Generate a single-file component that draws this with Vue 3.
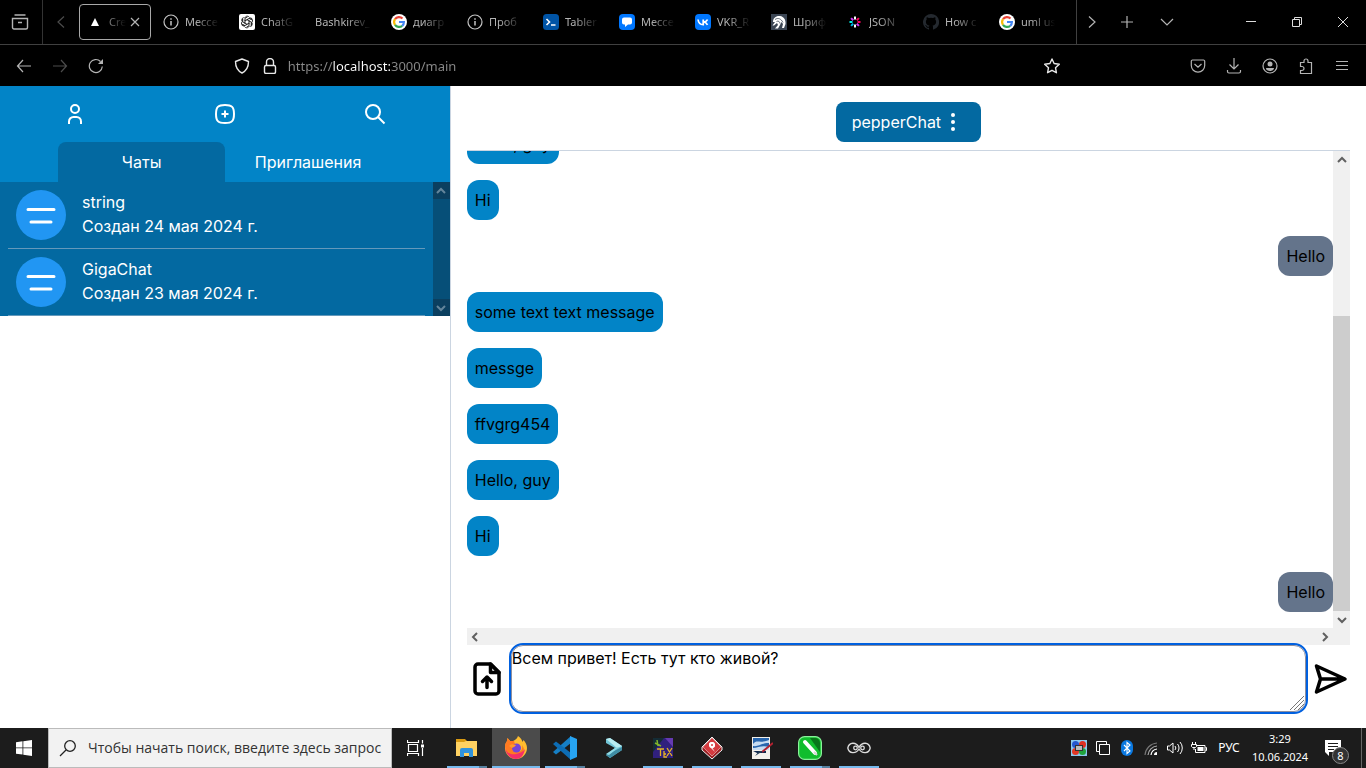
<script setup>
import { ref } from 'vue'

const tabs = [
  { icon: 'info', label: 'Мессе' },
  { icon: 'gpt', label: 'ChatG' },
  { icon: '', label: 'Bashkirev_' },
  { icon: 'google', label: 'диагр' },
  { icon: 'info', label: 'Проб' },
  { icon: 'tabler', label: 'Tabler' },
  { icon: 'messenger', label: 'Мессе' },
  { icon: 'vk', label: 'VKR_R' },
  { icon: 'font', label: 'Шриф' },
  { icon: 'json', label: 'JSON' },
  { icon: 'github', label: 'How c' },
  { icon: 'google', label: 'uml us' }
]

const chats = [
  { name: 'string', created: 'Создан 24 мая 2024 г.' },
  { name: 'GigaChat', created: 'Создан 23 мая 2024 г.' }
]

const messages = [
  { text: 'Hello, guy' },
  { text: 'Hi' },
  { text: 'Hello', own: true },
  { text: 'some text text message' },
  { text: 'messge' },
  { text: 'ffvgrg454' },
  { text: 'Hello, guy' },
  { text: 'Hi' },
  { text: 'Hello', own: true }
]

const apps = [
  { id: 'explorer', title: 'Проводник', open: true, group: true },
  { id: 'firefox', title: 'Firefox', open: true, active: true },
  { id: 'vscode', title: 'Visual Studio Code', open: true, group: true },
  { id: 'shell', title: 'Terminal' },
  { id: 'tex', title: 'TeX', open: true },
  { id: 'paradigm', title: 'Visual Paradigm', open: true },
  { id: 'paint', title: 'Редактор изображений', open: true },
  { id: 'corel', title: 'CorelDRAW', open: true, group: true },
  { id: 'eyes', title: 'Просмотр', open: true }
]

const url = ref('https://localhost:3000/main')
const draft = ref('Всем привет! Есть тут кто живой?')
const query = ref('')
const section = ref('chats')
</script>

<template>
  <div class="desktop">
    <header class="browser">
      <div class="tabstrip">
        <button class="ghost overview" aria-label="Обзор вкладок">
          <svg width="18" height="18" viewBox="0 0 18 18" class="line"><path d="M3.500 2h11M1.500 5.500h15v9a1.500 1.500 0 0 1-1.500 1.500H3a1.500 1.500 0 0 1-1.500-1.500zM7 9.500h4" stroke-width="1.400" /></svg>
        </button>
        <button class="ghost scroll-left" aria-label="Назад по вкладкам">
          <svg width="16" height="16" viewBox="0 0 16 16" class="line dim"><path d="M11 2.500 5 8l6 5.500" /></svg>
        </button>
        <div class="tab active">
          <svg width="16" height="16" viewBox="0 0 16 16"><path d="M8 4 12 12H4z" fill="#fff" /></svg>
          <span class="tab-label">Cre</span>
          <button class="ghost close-tab" aria-label="Закрыть вкладку">
            <svg width="10" height="10" viewBox="0 0 10 10" class="line"><path d="m1 1 8 8M9 1 1 9" /></svg>
          </button>
        </div>
        <div v-for="(tab, i) in tabs" :key="i" class="tab">
          <svg v-if="tab.icon" width="16" height="16" viewBox="0 0 16 16">
            <g v-if="tab.icon === 'info'" fill="none" stroke="#c4c4c4" stroke-width="1.200">
              <circle cx="8" cy="8" r="7" /><path d="M8 7v4.500M8 4.200v1.500" stroke-width="1.500" />
            </g>
            <g v-else-if="tab.icon === 'gpt'">
              <rect width="16" height="16" rx="2" fill="#fff" />
              <g fill="none" stroke="#222" stroke-width=".9">
                <path v-for="a in 6" :key="a" :transform="`rotate(${a * 60} 8 8)`" d="M6 7.200V4.300C6 1.800 9.500 1.500 10.500 3.500M6 4.300 8.500 2.900M8 5.700l3 1.700" />
              </g>
            </g>
            <g v-else-if="tab.icon === 'google'">
              <circle cx="8" cy="8" r="8" fill="#fff" />
              <g fill="none" stroke-width="2.200">
                <path d="M4 5.200A4.900 4.900 0 0 1 11.500 4.500" stroke="#ea4335" />
                <path d="M4 5.200a5 5 0 0 0 0 5.600" stroke="#fbbc05" />
                <path d="M4 10.800a4.900 4.900 0 0 0 7.200 1" stroke="#34a853" />
                <path d="M11.200 11.800A5 5 0 0 0 12.900 8H8" stroke="#4285f4" />
              </g>
            </g>
            <g v-else-if="tab.icon === 'tabler'">
              <rect width="16" height="16" rx="3.500" fill="#0054a6" />
              <path d="m3.500 5 3 3-3 3M8 11h4.500" fill="none" stroke="#fff" stroke-width="1.600" />
            </g>
            <g v-else-if="tab.icon === 'messenger'">
              <rect width="16" height="16" rx="4" fill="#07f" />
              <path d="M5 3.500h6A2 2 0 0 1 13 5.500v3a2 2 0 0 1-2 2H9L6 13v-2.500H5a2 2 0 0 1-2-2v-3a2 2 0 0 1 2-2z" fill="#fff" />
            </g>
            <g v-else-if="tab.icon === 'vk'">
              <rect width="16" height="16" rx="4" fill="#07f" />
              <path d="M3 5.500C3.500 9 5 10.700 8.200 10.700V5.500M8.500 8c2 0 3.300-1 4-2.500M8.500 8c2.300.3 3.300 1.300 4 2.900" fill="none" stroke="#fff" stroke-width="1.700" />
            </g>
            <g v-else-if="tab.icon === 'font'">
              <rect width="16" height="16" fill="#3c4654" />
              <path d="M2 8C2 4 5 1.500 9 2c4 .5 6 4 5.500 8L13 14h-2l1-4-1.500-2L9 11l-2 3.500H4L7 11 6 9l-3 2.500H1.500L4 8z" fill="#fff" />
              <path d="M4 5.500c3-2 6-1 8 3M5.500 7.500c2-1 3 0 3.500 2" fill="none" stroke="#3c4654" stroke-width=".8" />
            </g>
            <g v-else-if="tab.icon === 'json'" stroke-width="2">
              <path d="M8 2.500v3" stroke="#fff" /><path d="m11.900 4.100-2.100 2.100" stroke="#fb015b" />
              <path d="M13.500 8h-3" stroke="#fb015b" /><path d="m11.900 11.900-2.100-2.100" stroke="#d63aff" />
              <path d="M8 13.500v-3" stroke="#fff" /><path d="m4.100 11.900 2.100-2.100" stroke="#00b9f1" />
              <path d="M2.500 8h3" stroke="#00f2e6" /><path d="m4.100 4.100 2.100 2.100" stroke="#d63aff" />
            </g>
            <path v-else d="M8 0a8 8 0 0 0-2.500 15.600c.4 0 .5-.2.500-.4v-1.500c-2.200.5-2.700-1-2.700-1-.4-.9-.9-1.100-.9-1.100-.7-.5.1-.5.1-.5.800 0 1.200.8 1.200.8.700 1.200 1.900.9 2.300.7 0-.5.3-.9.500-1.100-1.800-.2-3.600-.9-3.600-4 0-.8.300-1.500.8-2.100 0-.200-.4-1 .1-2.100 0 0 .7-.2 2.200.8a8 8 0 0 1 4 0c1.500-1 2.200-.8 2.200-.8.5 1.100.1 1.900.1 2.100.5.600.8 1.300.8 2.100 0 3.100-1.800 3.800-3.600 4 .3.200.5.700.5 1.500v2.200c0 .2.100.5.600.4A8 8 0 0 0 8 0z" fill="#24292f" />
          </svg>
          <span class="tab-label">{{ tab.label }}</span>
        </div>
        <div class="strip-end">
          <button class="ghost w30" aria-label="Вперёд по вкладкам">
            <svg width="16" height="16" viewBox="0 0 16 16" class="line"><path d="m5 2.500 6 5.500-6 5.500" /></svg>
          </button>
          <button class="ghost w40" aria-label="Новая вкладка">
            <svg width="14" height="14" viewBox="0 0 14 14" class="line"><path d="M7 1v12M1 7h12" /></svg>
          </button>
          <button class="ghost w40" aria-label="Список вкладок">
            <svg width="14" height="14" viewBox="0 0 14 14" class="line"><path d="m1 4 6 6 6-6" /></svg>
          </button>
        </div>
        <div class="window-controls">
          <button class="ghost w46" aria-label="Свернуть">
            <svg width="10" height="10" viewBox="0 0 10 10" class="line white"><path d="M0 4.500h10" /></svg>
          </button>
          <button class="ghost w46" aria-label="Восстановить">
            <svg width="10" height="10" viewBox="0 0 10 10" class="line white"><path d="M.5 2.500h7v7h-7zM2.500 2.500v-2h7v7h-2" /></svg>
          </button>
          <button class="ghost w46" aria-label="Закрыть">
            <svg width="10" height="10" viewBox="0 0 10 10" class="line white"><path d="m0 0 10 10M10 0 0 10" /></svg>
          </button>
        </div>
      </div>

      <div class="toolbar">
        <button class="ghost w36" aria-label="Назад">
          <svg width="16" height="16" viewBox="0 0 16 16" class="line"><path d="M15 8H1.500M7 2 1.500 8 7 14" /></svg>
        </button>
        <button class="ghost w36" aria-label="Вперёд">
          <svg width="16" height="16" viewBox="0 0 16 16" class="line dim"><path d="M1 8h13.500M9 2l5.500 6L9 14" /></svg>
        </button>
        <button class="ghost w36" aria-label="Обновить">
          <svg width="16" height="16" viewBox="0 0 16 16" class="line"><path d="M14.300 8.500A6.500 6.500 0 1 1 12.500 3.500" /><path d="M15 1v5h-5z" fill="#b4b4b4" stroke="none" /></svg>
        </button>
        <div class="spacer"></div>
        <div class="address">
          <svg width="16" height="16" viewBox="0 0 16 16" class="line light"><path d="M8 1 14.500 3.500C14.500 9 13 12.500 8 15 3 12.500 1.500 9 1.500 3.500z" stroke-linejoin="round" /></svg>
          <svg width="16" height="16" viewBox="0 0 16 16" class="line light"><rect x="2.500" y="7.500" width="11" height="8" rx="1.500" /><path d="M4.500 7.500V4a3.500 3.500 0 0 1 7 0v3.500" /></svg>
          <input v-model="url" class="url" aria-label="Адрес" />
          <button class="ghost star" aria-label="Добавить в закладки">
            <svg width="16" height="16" viewBox="0 0 16 16" class="line light"><path d="m8 1 2.100 4.500 5.200.7-3.800 3.500.9 5L8 12.300l-4.400 2.400.9-5L.7 6.200l5.200-.7z" stroke-linejoin="round" /></svg>
          </button>
        </div>
        <div class="spacer"></div>
        <button class="ghost w36" aria-label="Pocket">
          <svg width="16" height="16" viewBox="0 0 16 16" class="line"><path d="M2.500 2h11A1.200 1.200 0 0 1 14.700 3v4.500a6.700 6.700 0 0 1-13.400 0V3A1.200 1.200 0 0 1 2.500 2zM4.500 6 8 9.300 11.500 6" /></svg>
        </button>
        <button class="ghost w36" aria-label="Загрузки">
          <svg width="16" height="16" viewBox="0 0 16 16" class="line"><path d="M8 0v10.500M3.500 6.500 8 11l4.500-4.500M1.500 12v1.500a1.500 1.500 0 0 0 1.500 1.500h10a1.500 1.500 0 0 0 1.500-1.500V12" /></svg>
        </button>
        <button class="ghost w36" aria-label="Аккаунт">
          <svg width="16" height="16" viewBox="0 0 16 16" class="line"><circle cx="8" cy="8" r="7" /><circle cx="8" cy="6" r="2.500" fill="#b4b4b4" stroke="none" /><path d="M4 10h8c0 2-2 3-4 3s-4-1-4-3z" fill="#b4b4b4" stroke="none" /></svg>
        </button>
        <button class="ghost w36" aria-label="Расширения">
          <svg width="16" height="16" viewBox="0 0 16 16" class="line"><path d="M2.500 4.500H6V3a2 2 0 0 1 4 0v1.500h3.500v11h-11v-3H4a2 2 0 0 0 0-4H2.500z" /></svg>
        </button>
        <button class="ghost w36" aria-label="Меню">
          <svg width="14" height="14" viewBox="0 0 14 14" class="line"><path d="M1 2.500h12M1 6.500h12M1 10.500h12" /></svg>
        </button>
      </div>
    </header>

    <main class="page">
      <aside class="sidebar">
        <nav class="actions">
          <button class="ghost" aria-label="Профиль">
            <svg width="24" height="24" viewBox="0 0 24 24" class="icon"><circle cx="12" cy="7" r="4" /><path d="M6 22v-2.500A4.500 4.500 0 0 1 10.500 15h3a4.500 4.500 0 0 1 4.500 4.500V22" /></svg>
          </button>
          <button class="ghost" aria-label="Создать чат">
            <svg width="24" height="24" viewBox="0 0 24 24" class="icon"><path d="M12 3c7 0 9 2 9 9s-2 9-9 9-9-2-9-9 2-9 9-9zM12 8.500v7M8.500 12h7" /></svg>
          </button>
          <button class="ghost" aria-label="Поиск">
            <svg width="24" height="24" viewBox="0 0 24 24" class="icon"><circle cx="10" cy="10" r="7" /><path d="m15 15 6.500 6.500" /></svg>
          </button>
        </nav>
        <div class="sections">
          <button class="section" :class="{ selected: section === 'chats' }" @click="section = 'chats'">Чаты</button>
          <button class="section" :class="{ selected: section === 'invites' }" @click="section = 'invites'">Приглашения</button>
        </div>
        <div class="chat-panel">
          <ul class="chats">
            <li v-for="chat in chats" :key="chat.name" class="chat">
              <svg width="50" height="50" viewBox="0 0 50 50"><circle cx="25" cy="25" r="25" fill="#2196f3" /><path d="M12 19.500h26M15 32h20" stroke="#fff" stroke-width="3" stroke-linecap="round" /></svg>
              <div>
                <div>{{ chat.name }}</div>
                <div>{{ chat.created }}</div>
              </div>
            </li>
          </ul>
          <div class="bar dark" aria-hidden="true">
            <div class="arrow"><svg width="10" height="8" viewBox="0 0 10 8"><path d="m1 6 4-4 4 4" /></svg></div>
            <div class="grow"></div>
            <div class="arrow"><svg width="10" height="8" viewBox="0 0 10 8"><path d="m1 2 4 4 4-4" /></svg></div>
          </div>
        </div>
      </aside>

      <section class="conversation">
        <div class="conversation-head">
          <button class="room">
            pepperChat
            <svg width="24" height="24" viewBox="0 0 24 24" fill="#fff"><circle cx="12" cy="5" r="2" /><circle cx="12" cy="12" r="2" /><circle cx="12" cy="19" r="2" /></svg>
          </button>
        </div>
        <div class="history">
          <div class="messages">
            <div v-for="(m, i) in messages" :key="i" class="message" :class="{ own: m.own }">{{ m.text }}</div>
          </div>
          <div class="bar" aria-hidden="true">
            <div class="arrow"><svg width="10" height="8" viewBox="0 0 10 8"><path d="m1 6 4-4 4 4" /></svg></div>
            <div class="grow"></div>
            <div class="thumb"></div>
            <div class="arrow"><svg width="10" height="8" viewBox="0 0 10 8"><path d="m1 2 4 4 4-4" /></svg></div>
          </div>
        </div>
        <div class="bar horizontal" aria-hidden="true">
          <div class="arrow"><svg width="8" height="10" viewBox="0 0 8 10"><path d="M6 1 2 5l4 4" /></svg></div>
          <div class="grow"></div>
          <div class="arrow"><svg width="8" height="10" viewBox="0 0 8 10"><path d="m2 1 4 4-4 4" /></svg></div>
        </div>
        <form class="composer" @submit.prevent>
          <button type="button" class="ghost" aria-label="Прикрепить файл">
            <svg width="40" height="40" viewBox="0 0 40 40" class="bold"><path d="M11 5h12.500L32 13.500V32a3 3 0 0 1-3 3H11a3 3 0 0 1-3-3V8a3 3 0 0 1 3-3z" /><path d="M23.500 5v8.500H32zM20 28.500V18.500M15.500 22.500 20 18l4.500 4.500" /></svg>
          </button>
          <div class="field">
            <textarea v-model="draft" aria-label="Сообщение"></textarea>
            <svg class="grip" width="14" height="14" viewBox="0 0 14 14" aria-hidden="true"><path d="M0 14 14 0M4 14 14 4M8 14l6-6" stroke="#777" stroke-width="1" /></svg>
          </div>
          <button class="ghost" aria-label="Отправить">
            <svg width="40" height="40" viewBox="0 0 40 40" class="bold"><path d="M35 20 6.500 33 10.500 20 6.500 7zM10.500 20h24" /></svg>
          </button>
        </form>
      </section>
    </main>

    <footer class="taskbar">
      <button class="ghost w48" aria-label="Пуск">
        <svg width="16" height="16" viewBox="0 0 16 16" fill="#fff"><path d="M0 2.200 6.500 1.300v6.200H0zM7.300 1.200 16 0v7.500H7.300zM0 8.300h6.500v6.300L0 13.700zM7.300 8.300H16V16l-8.700-1.200z" /></svg>
      </button>
      <label class="search">
        <svg width="18" height="18" viewBox="0 0 18 18" fill="none" stroke="#222" stroke-width="1.300"><circle cx="11" cy="7" r="5.300" /><path d="M7 11 1 17" /></svg>
        <input v-model="query" placeholder="Чтобы начать поиск, введите здесь запрос" aria-label="Поиск" />
      </label>
      <button class="ghost w48" aria-label="Представление задач">
        <svg width="18" height="16" viewBox="0 0 18 16" fill="none" stroke="#fff" stroke-width="1.200"><path d="M1.500 4.500h9v7h-9zM.5 0v2.500h11V0M.5 16v-2.500h11V16M15.500 0v3.500M15.500 8v8" /><path d="M14 4.500h3v3h-3z" fill="#fff" stroke="none" /></svg>
      </button>
      <div class="apps">
        <button v-for="app in apps" :key="app.id" class="app" :class="{ open: app.open, current: app.active, group: app.group }" :aria-label="app.title">
          <svg width="24" height="24" viewBox="0 0 24 24">
            <g v-if="app.id === 'explorer'">
              <path d="M1 3h9l2 2v4H1z" fill="#d99a12" /><path d="M1 6h8l2-1h11v15H1z" fill="#ffd262" />
              <path d="M5 14a2 2 0 0 1 2-2h9a2 2 0 0 1 2 2v7h-4v-4H9v4H5z" fill="#3093dc" />
            </g>
            <g v-else-if="app.id === 'firefox'">
              <path d="M14 0c3 2 4 4 4.500 6l1-2c2 2 3.500 5 3.500 8a11 11 0 1 1-22 0c0-3 .6-5 1.800-6.500L3.500 2 6 5h3c2-1 4-2 5-5z" fill="#ffbd2f" />
              <path d="M1 11c0-3 .6-4 1.800-5.500L3.500 2 6 5h4l1 3c-3 3-3 8 2 8 4 0 6-3 5-7 4 5 1 11-5 12.500-6 1-10-3-11-7z" fill="#ff7a22" />
              <path d="M1 12c2 6 7 7 11 6s7-2 9-5c-1 6-4 10-9 10S2 19 1 12z" fill="#f52f68" />
              <circle cx="12.500" cy="12" r="4.500" fill="#7545d7" /><path d="M5 10c2-2 4-2 7-1-1 2-3 2-4 3z" fill="#ff9a29" />
            </g>
            <g v-else-if="app.id === 'vscode'">
              <path d="M18 0v7L3 18.500 0 16z" fill="#167fc5" /><path d="M18 24v-7L3 5.500 0 8z" fill="#0d6db5" /><path d="m17 0 7 3v18l-7 3V0z" fill="#27a4f2" />
            </g>
            <g v-else-if="app.id === 'shell'">
              <path d="m4 3 4-1 12 8v4L8 22l-4-3 9-7-9-5z" fill="#71c4d6" /><path d="m4 3 4-1 12 8-5 2z" fill="#b9edf1" /><path d="M20 11v3L8 22l-4-3z" fill="#3f8ca3" /><path d="m13 12 4-1L7 19l-3-1z" fill="#8fdbe6" />
            </g>
            <g v-else-if="app.id === 'tex'">
              <rect x="2" y="2" width="20" height="20" fill="#30207d" /><path d="M2 2h11L2 16z" fill="#142c35" /><path d="M14 2h8v9z" fill="#653ab2" />
              <path d="m4 7 6 3M6 4l1 6" stroke="#83b52a" stroke-width="1.500" />
              <path d="M6 13h7M9.500 13v7M13 15v6h3M13 18h2M16 12l5 8M21 12l-5 8" stroke="#e7b423" stroke-width="1.300" fill="none" />
            </g>
            <g v-else-if="app.id === 'paradigm'">
              <path d="m12 1 10 10v3L12 23 2 14v-3z" fill="#9e2024" stroke="#eee" /><path d="m12 2 9 9-9 9-9-9z" fill="#d43a3f" stroke="#f0c7c8" stroke-width=".6" /><path d="M9 9.500A3 3 0 1 1 12.500 12L15 16l-4-4z" fill="#fff" /><circle cx="12" cy="9" r="3" fill="#fff" /><circle cx="12" cy="9" r="1" fill="#d43a3f" />
            </g>
            <g v-else-if="app.id === 'paint'">
              <path d="M3 1h18v22H3z" fill="#f3f0ea" /><path d="M4 2h16v12H4z" fill="#2765ad" /><path d="M4 8c4-5 6 0 16-4v3C12 7 10 11 4 10zM4 12c5 0 9-3 16-1v3H4z" fill="#c6dcf2" /><path d="M4 15h13v2H8z" fill="#122a4d" /><path d="m24 7-11 9" stroke="#b32130" stroke-width="2" /><path d="m14 15-8 5 4-5z" fill="#243c54" />
            </g>
            <g v-else-if="app.id === 'corel'">
              <rect x=".6" y=".6" width="22.800" height="22.800" rx="6" fill="#10bd2d" stroke="#8af29a" stroke-width="1.200" /><path d="M12 2h5a5 5 0 0 1 5 5v9z" fill="#08751a" /><path d="m7 6 10 11" stroke="#fff" stroke-width="4" stroke-linecap="round" /><path d="m16 16 3 3" stroke="#d6d6d6" stroke-width="2" />
            </g>
            <g v-else fill="none" stroke="#ddd" stroke-width="1.300">
              <path d="M12 11.500C9 5.500 2 6 .8 12c1.200 6 8.200 6 11.200 1 3 5 10 5 11.200-1C22 6 15 5.500 12 11.500z" /><circle cx="8.500" cy="12" r="1.800" /><circle cx="15.500" cy="12" r="1.800" />
            </g>
          </svg>
        </button>
      </div>
      <div class="tray">
        <svg width="16" height="16" viewBox="0 0 16 16"><rect width="16" height="16" fill="#8cc9ee" /><circle cx="4.500" cy="4.500" r="3.500" fill="#2657cf" /><circle cx="11.500" cy="4.500" r="3.500" fill="#df3022" /><circle cx="4.500" cy="11.500" r="3.500" fill="#e23826" /><circle cx="11.500" cy="11.500" r="3.500" fill="#20a43c" /><rect x="4.500" y="5.500" width="7" height="5" fill="#bbb" stroke="#333" /></svg>
        <svg width="16" height="16" viewBox="0 0 16 16" fill="none" stroke="#fff"><path d="M4.500 4.500h10v10h-10zM4 11.500H1.500v-10h10V4" /></svg>
        <svg width="16" height="16" viewBox="0 0 16 16"><rect x="2" width="12" height="16" rx="6" fill="#0a78e0" /><path d="m5 5 6 6-3 2.500v-11L11 5l-6 6" fill="none" stroke="#fff" stroke-width="1.100" /></svg>
        <svg width="16" height="16" viewBox="0 0 16 16" fill="none" stroke-width="1.200"><path d="M2 15A13 13 0 0 1 14 3" stroke="#777" /><path d="M5 15a10 10 0 0 1 9-9" stroke="#aaa" /><path d="M8 15a7 7 0 0 1 6-6" stroke="#fff" /><path d="M11 15a3 3 0 0 1 3-3v3z" fill="#fff" /></svg>
        <svg width="16" height="16" viewBox="0 0 16 16" fill="none" stroke="#fff"><path d="M.5 6v4h2L6 13V3L2.500 6zM8 6a3 3 0 0 1 0 4M10.500 4a6 6 0 0 1 0 8M13 2a9 9 0 0 1 0 12" /></svg>
        <svg width="16" height="16" viewBox="0 0 16 16" fill="none" stroke="#fff"><path d="M5 5.500h9v7H4.500V9M14.500 7.500h1v3h-1M1.500 2v2.500M4.500 2v2.500M.5 4.500h5v2l-1 1h-3l-1-1zM3 7.500V10" /><path d="M6.500 7h6v4h-6z" fill="#fff" stroke="none" /></svg>
      </div>
      <span class="lang">РУС</span>
      <div class="clock"><div>3:29</div><div>10.06.2024</div></div>
      <button class="ghost notices" aria-label="Уведомления: 8">
        <svg width="18" height="18" viewBox="0 0 18 18"><path d="M1 1h16v12H5v4l-4-4z" fill="#fff" /><path d="M4 4.500h10M4 7.500h10M4 10.500h6" stroke="#1c1c1c" /></svg>
        <span class="count">8</span>
      </button>
    </footer>
  </div>
</template>

<style>
body {
  margin: 0;
  background: #fff;
}
</style>

<style scoped>
* {
  box-sizing: border-box;
}
.desktop {
  display: flex;
  flex-direction: column;
  height: 100vh;
  overflow: hidden;
  font-family: Inter, "Liberation Sans", sans-serif;
  font-size: 16px;
  line-height: 24px;
}
button,
input,
textarea {
  font: inherit;
  color: inherit;
}
svg {
  display: block;
  flex: none;
}
.ghost {
  display: flex;
  flex: none;
  align-items: center;
  justify-content: center;
  padding: 0;
  border: 0;
  background: none;
}
.line {
  fill: none;
  stroke: #b4b4b4;
  stroke-width: 1.2;
}
.line.dim {
  stroke: #4c4c4c;
}
.line.light {
  stroke: #e8e8e8;
  stroke-width: 1.4;
}
.line.white {
  stroke: #ddd;
  stroke-width: 1;
}
.w30 { width: 30px; }
.w36 { width: 36px; height: 36px; }
.w40 { width: 40px; }
.w46 { width: 46px; }
.w48 { width: 48px; }

.browser {
  flex: none;
  background: #000;
  color: #b4b4b4;
  font-family: "Noto Sans", "Open Sans", sans-serif;
  font-size: 11px;
  line-height: 16px;
}
.tabstrip {
  display: flex;
  height: 45px;
  border-bottom: 1px solid #404040;
}
.overview {
  width: 43px;
  padding-right: 2px;
  border-right: 1px solid #333;
}
.scroll-left {
  width: 36px;
}
.tab {
  display: flex;
  flex: none;
  align-items: center;
  gap: 6px;
  width: 72px;
  height: 36px;
  margin: 4px 4px 4px 0;
  padding: 0 8px;
}
.tab.active {
  border: 1px solid #a8a8a8;
  border-radius: 4px;
  padding: 0 8px 0 7px;
}
.tab-label {
  flex: 1;
  min-width: 0;
  white-space: nowrap;
  mask-image: linear-gradient(to left, transparent, #000 24px);
}
.close-tab {
  width: 14px;
  margin-left: -4px;
}
.strip-end {
  display: flex;
  margin-left: 9px;
  border-left: 1px solid #404040;
}
.window-controls {
  display: flex;
  margin-left: auto;
}
.toolbar {
  display: flex;
  align-items: center;
  height: 41px;
  padding: 0 6px;
}
.spacer {
  flex: 1;
}
.address {
  display: flex;
  flex: 7.2;
  align-items: center;
  gap: 12px;
  padding: 0 5px;
}
.url {
  flex: 1;
  min-width: 0;
  height: 24px;
  margin-left: -2px;
  padding: 0;
  border: 0;
  outline: 0;
  background: linear-gradient(to right, #8a8a8a 45px, #fff 45px, #fff 102px, #8a8a8a 102px);
  background-clip: text;
  color: transparent;
  font-size: 13px;
}

.page {
  display: flex;
  flex: 1;
  min-height: 0;
}
.sidebar {
  width: 33%;
  border-right: 1px solid #cbd5e1;
  color: #fff;
}
.actions {
  display: grid;
  grid-template-columns: repeat(3, 1fr);
  height: 56px;
  background: #0284c7;
}
.icon {
  fill: none;
  stroke: #fff;
  stroke-width: 2;
}
.sections {
  display: flex;
  justify-content: center;
  background: #0284c7;
}
.section {
  width: 37%;
  padding: 8px;
  border: 0;
  border-radius: 8px 8px 0 0;
  background: none;
}
.section.selected {
  background: #0369a1;
}
.chat-panel {
  display: flex;
  background: #0369a1;
}
.chats {
  flex: 1;
  margin: 0;
  padding: 0 8px;
  list-style: none;
}
.chat {
  display: flex;
  gap: 16px;
  padding: 8px;
  border-bottom: 1px solid #6499bb;
}
.bar {
  display: flex;
  flex: none;
  flex-direction: column;
  width: 17px;
  background: #f0f0f0;
  stroke: #606060;
}
.bar path {
  fill: none;
  stroke-width: 2;
}
.bar.dark {
  background: #064f78;
  stroke: #64859b;
}
.bar.dark .arrow {
  background: #0b3f5f;
}
.bar.horizontal {
  flex-direction: row;
  width: 100%;
  padding-right: 17px;
}
.arrow {
  display: flex;
  flex: none;
  align-items: center;
  justify-content: center;
  width: 17px;
  height: 17px;
}
.grow {
  flex: 1;
}
.thumb {
  flex: 2;
  background: #cdcdcd;
}

.conversation {
  display: flex;
  flex: 1;
  flex-direction: column;
  min-width: 0;
  padding: 16px;
}
.conversation-head {
  display: flex;
  justify-content: center;
  padding-bottom: 8px;
  border-bottom: 1px solid #cbd5e1;
}
.room {
  display: flex;
  padding: 8px 16px;
  border: 0;
  border-radius: 8px;
  background: #0369a1;
  color: #fff;
}
.history {
  display: flex;
  flex: 1;
  min-height: 0;
}
.messages {
  display: flex;
  flex: 1;
  flex-direction: column;
  align-items: flex-start;
  justify-content: flex-end;
  gap: 16px;
  padding-bottom: 16px;
  overflow: hidden;
}
.message {
  flex: none;
  padding: 8px;
  border-radius: 12px;
  background: #0284c7;
  color: #000;
}
.message.own {
  align-self: flex-end;
  background: #64748b;
}
.composer {
  display: flex;
  align-items: center;
  gap: 4px;
}
.bold {
  fill: none;
  stroke: #000;
  stroke-width: 3.5;
  stroke-linecap: round;
  stroke-linejoin: round;
}
.field {
  position: relative;
  display: flex;
  flex: 1;
}
textarea {
  flex: 1;
  height: 67px;
  padding: 0;
  border: 1px solid #8f8f9d;
  border-radius: 12px;
  outline: 2px solid #0060df;
  background: #fff;
  color: #000;
  resize: none;
}
.grip {
  position: absolute;
  right: 2px;
  bottom: 2px;
}

.taskbar {
  display: flex;
  flex: none;
  height: 40px;
  background: #1c1c1c;
  color: #fff;
  font-family: "Noto Sans", "Open Sans", sans-serif;
  font-size: 12px;
  line-height: 18px;
}
.search {
  display: flex;
  align-items: center;
  gap: 11px;
  width: 344px;
  padding: 0 4px 0 10px;
  border: 1px solid #bbb;
  background: #f2f2f2;
  color: #333;
}
.search input {
  flex: 1;
  min-width: 0;
  padding: 0;
  border: 0;
  outline: 0;
  background: none;
  font-family: "Open Sans", "Noto Sans", sans-serif;
  font-size: 14px;
}
.search input::placeholder {
  color: #333;
  opacity: 1;
}
.apps {
  display: flex;
  gap: 1px;
  margin-left: 3px;
}
.app {
  position: relative;
  display: flex;
  align-items: center;
  justify-content: center;
  width: 48px;
  padding: 0;
  border: 0;
  background: none;
}
.app.open::after {
  content: "";
  position: absolute;
  right: 4px;
  bottom: 0;
  left: 4px;
  height: 2px;
  background: #76b9ed;
}
.app.group::after {
  background: linear-gradient(to left, #56809f 8px, #76b9ed 8px);
}
.app.current {
  background: #4b4b4b;
}
.app.current::after {
  right: 0;
  left: 0;
}
.tray {
  display: flex;
  align-items: center;
  gap: 8px;
  margin-left: auto;
}
.lang {
  align-self: center;
  width: 44px;
  text-align: center;
}
.clock {
  align-self: center;
  width: 58px;
  font-size: 11px;
  text-align: center;
}
.notices {
  position: relative;
  width: 53px;
  margin-right: 4px;
  padding-right: 4px;
  border-right: 1px solid #666;
}
.count {
  position: absolute;
  right: 12px;
  bottom: 4px;
  width: 17px;
  height: 17px;
  border: 1px solid #888;
  border-radius: 50%;
  background: #333;
  font-size: 11px;
  line-height: 15px;
}
</style>
